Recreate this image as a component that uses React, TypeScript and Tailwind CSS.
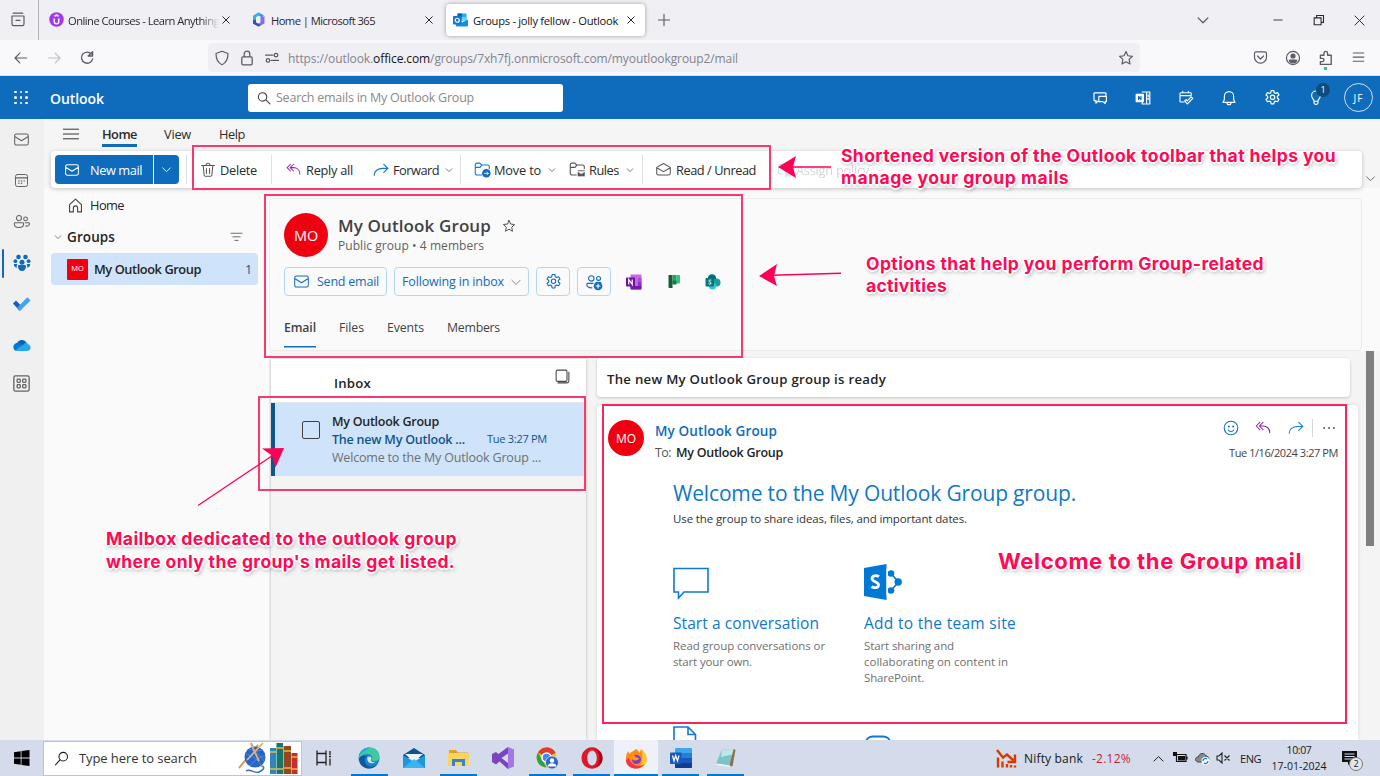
import React, { useLayoutEffect, useRef, useState } from "react";

type Kids = { children?: React.ReactNode };

/** Single line of text whose tracking is adjusted so that it spans `w` pixels; `drop` lowers it within its row. */
function Fit({ w, drop = true, className = "", children }: Kids & { w: number; drop?: boolean; className?: string }) {
  const ref = useRef<HTMLSpanElement>(null);
  const [spacing, setSpacing] = useState(0);
  useLayoutEffect(() => {
    const el = ref.current;
    if (!el) return;
    el.style.letterSpacing = "0px";
    const natural = el.getBoundingClientRect().width;
    const next = (w - natural) / Math.max(1, (el.textContent || "").length);
    el.style.letterSpacing = `${next}px`;
    setSpacing(next);
  }, [w]);
  return (
    <span ref={ref} className={`inline-block shrink-0 whitespace-pre ${drop ? "pt-[2px]" : ""} ${className}`} style={{ letterSpacing: spacing }}>
      {children}
    </span>
  );
}

/** Outline icon on a 20 unit grid. */
function Ico({ d, s = 16, sw = 1.3, className = "", children }: Kids & { d?: string; s?: number; sw?: number; className?: string }) {
  return (
    <svg
      width={s}
      height={s}
      viewBox="0 0 20 20"
      fill="none"
      stroke="currentColor"
      strokeWidth={sw}
      strokeLinecap="round"
      strokeLinejoin="round"
      className={`shrink-0 ${className}`}
    >
      {d && <path d={d} />}
      {children}
    </svg>
  );
}

const P = {
  x: "M3.500 3.500l13 13M16.500 3.500L3.500 16.500",
  chev: "M3 7l7 7 7-7",
  mail: "M4 3.5h12a2 2 0 0 1 2 2v9a2 2 0 0 1-2 2H4a2 2 0 0 1-2-2v-9a2 2 0 0 1 2-2zM2 6.5l8 5 8-5",
  replyAll: "M6 3L1.5 7.5 6 12M10 3L5.5 7.5 10 12M5.5 7.5H10c4.500 0 8.500 3 8.500 8.500",
  forward: "M13.500 3L18.500 8l-5 5M18.500 8H12C6 8 1.500 11.500 1.500 16.500",
  star: "M10 2l2.400 5.200 5.600.7-4.100 3.900 1.100 5.700-5-2.800-5 2.800 1.100-5.700L2 7.900l5.600-.7z",
  gear: "M8.400 1.800h3.200l.5 2.500 1.500.9 2.400-.9 1.600 2.800-1.900 1.600v1.900l1.900 1.700-1.600 2.700-2.400-.8-1.500.9-.5 2.500H8.400l-.5-2.500-1.500-.9-2.400.8-1.600-2.700 1.900-1.700V8.700L2.400 7.100 4 4.300l2.400.9 1.500-.9z",
};

const Gear = ({ s, className, sw }: { s: number; className?: string; sw?: number }) => (
  <Ico s={s} className={className} sw={sw} d={P.gear}>
    <circle cx="10" cy="9.700" r="2.600" />
  </Ico>
);

function OutlookLogo() {
  return (
    <svg width="15" height="14" viewBox="0 0 30 28" className="shrink-0">
      <path d="M9 1h18v14H9z" fill="#28a8ea" />
      <path d="M9 1h9v7H9z" fill="#0364b8" />
      <path d="M18 8h9v6h-9z" fill="#50d9ff" />
      <path d="M6 13l12 6 12-6v12a2 2 0 0 1-2 2H8a2 2 0 0 1-2-2z" fill="#1490df" />
      <rect x="0" y="6" width="17" height="17" rx="1.500" fill="#0f78d4" />
      <circle cx="8.500" cy="14.500" r="4" fill="none" stroke="#fff" strokeWidth="2.400" />
    </svg>
  );
}

function TabStrip() {
  return (
    <div className="flex h-10 shrink-0 items-center bg-[#f0eff4] text-[11.2px] text-[#2b2a33]">
      <div className="flex h-10 w-[39px] shrink-0 items-center justify-center border-r border-[#b4b3ba] pr-[3px] text-[#5b5b66]">
        <Ico s={16} d="M4 1.500h12M2.500 5h15v10a2 2 0 0 1-2 2h-11a2 2 0 0 1-2-2zM7.500 10.500h5" sw={1.500} />
      </div>
      <div className="flex w-[202px] shrink-0 items-center pl-[10px]">
        <svg width="15" height="15" viewBox="0 0 30 30" className="shrink-0">
          <circle cx="15" cy="15" r="14.500" fill="#a435f0" />
          <path d="M10.500 13v6a4.500 4.500 0 0 0 9 0v-6M11 8.500L15 6l4 2.500" fill="none" stroke="#fff" strokeWidth="3" />
        </svg>
        <div className="ml-[4px] flex w-[151px] overflow-hidden [mask-image:linear-gradient(to_right,black_88%,transparent)]">
          <Fit w={151}>Online Courses - Learn Anything</Fit>
        </div>
        <Ico s={10} d={P.x} sw={2} className="ml-[2px]" />
      </div>
      <div className="flex w-[205px] shrink-0 items-center pl-[10px]">
        <svg width="15" height="15" viewBox="0 0 30 30" className="shrink-0">
          <path d="M15 1l10 5v10l-6-3V9l-4-2-5 3v11l5 3v5L4 23V8z" fill="#4b8ff0" />
          <path d="M15 1L4 8v8l6-3v-3l6-4z" fill="#30b9dd" />
          <path d="M27 8v15l-12 6-5-3 9-5v-8l6-3z" fill="#8b6be0" />
          <path d="M4 16v7l11 6 5-3-10-5v-5z" fill="#3154b5" />
        </svg>
        <Fit w={104} className="ml-[5px]">Home | Microsoft 365</Fit>
        <Ico s={10} d={P.x} sw={2} className="ml-[49px]" />
      </div>
      <div className="flex h-8 w-[199px] shrink-0 items-center rounded-[4px] bg-white pl-[7px] shadow-[0_0_4px_rgba(0,0,0,0.35)]">
        <OutlookLogo />
        <Fit w={145} className="ml-[5px] text-[#15141a]">Groups - jolly fellow - Outlook</Fit>
        <Ico s={10} d={P.x} sw={2} className="ml-[8px]" />
      </div>
      <Ico s={14} d="M10 2v16M2 10h16" sw={1.600} className="ml-[12px] text-[#5b5b66]" />
      <Ico s={14} d={P.chev} sw={1.800} className="ml-[525px] text-[#5b5b66]" />
      <Ico s={12} d="M3 10h14" sw={1.500} className="ml-[62px]" />
      <Ico s={12} sw={1.800} className="ml-[29px]">
        <path d="M2 6.500h11.500V18H2zM6 6V2.500h11.500V14H14" strokeLinejoin="miter" />
      </Ico>
      <Ico s={13} d="M3 3l14 14M17 3L3 17" sw={1.500} className="ml-[28px]" />
    </div>
  );
}

function AddressBar() {
  return (
    <div className="flex h-9 shrink-0 items-center border-b border-[#cfe0ef] bg-[#f9f9fb] text-[#5b5b66]">
      <div className="flex gap-[17px] pl-[13px]">
        <Ico s={16} d="M17 10H2.500M8.500 4l-6 6 6 6" sw={1.500} />
        <Ico s={16} d="M3 10h14.500M11.500 4l6 6-6 6" sw={1.500} className="text-[#c0c0c6]" />
        <Ico s={16} d="M15.500 5a7 7 0 1 0 1.500 6M17 2v5.500h-5.500z" sw={1.600} />
      </div>
      <div className="ml-[113px] flex h-[29px] w-[932px] shrink-0 items-center rounded-[4px] bg-[#f0eff4] pl-[6px] pr-[6px]">
        <Ico s={16} d="M10 1.500l7.500 2.800C17.500 11 15 16 10 18.500 5 16 2.500 11 2.500 4.300z" sw={1.500} />
        <Ico s={16} d="M5 8.500h10a1.500 1.500 0 0 1 1.500 1.500v7a1.500 1.500 0 0 1-1.500 1.500H5A1.500 1.500 0 0 1 3.500 17v-7A1.500 1.500 0 0 1 5 8.500zM6.500 8V5a3.500 3.500 0 0 1 7 0v3" sw={1.600} className="ml-[9px]" />
        <Ico s={16} sw={1.600} className="ml-[9px]">
          <path d="M2 6.500h9M9 13h9" />
          <circle cx="15" cy="6.500" r="2.200" />
          <circle cx="5" cy="13" r="2.200" />
        </Ico>
        <Fit w={450} className="ml-[8px] text-[12px] text-[#83838c]">
          https://outlook.<span className="text-[#15141a]">office.com</span>/groups/7xh7fj.onmicrosoft.com/myoutlookgroup2/mail
        </Fit>
        <Ico s={16} d={P.star} sw={1.500} className="ml-auto" />
      </div>
      <div className="ml-[113px] flex gap-[17px]">
        <Ico s={15} d="M4 2.500h12A2 2 0 0 1 18 4.500v5a8 8 0 0 1-16 0v-5a2 2 0 0 1 2-2zM6 8l4 4 4-4" sw={1.600} />
        <Ico s={16} sw={1.500}>
          <circle cx="10" cy="10" r="8.200" />
          <circle cx="10" cy="7.500" r="2.500" fill="currentColor" />
          <path d="M5.500 12.500h9c0 2-2 3.500-4.500 3.500s-4.500-1.500-4.500-3.500z" fill="currentColor" />
        </Ico>
        <div className="relative">
          <Ico s={16} d="M3 6.500h4.500V4a2 2 0 0 1 4.500 0v2.500h4.500V18H3v-3.500h2.500a2 2 0 0 0 0-4H3z" sw={1.700} />
          <div className="absolute left-[6px] top-[17px] size-[3px] bg-[#2ac3a2]" />
        </div>
        <Ico s={15} d="M3 4h14M3 9.500h14M3 15h14" sw={1.500} />
      </div>
    </div>
  );
}

function SuiteHeader() {
  return (
    <div className="flex h-[43px] shrink-0 items-center bg-[#0f6cbd] text-white">
      <div className="ml-[14px] grid w-[14px] grid-cols-3 gap-[3px]">
        {Array.from({ length: 9 }, (_, i) => (
          <div key={i} className="size-[2.500px] rounded-full bg-white" />
        ))}
      </div>
      <Fit w={54} className="ml-[22px] text-[14px] font-semibold">Outlook</Fit>
      <div className="ml-[144px] flex h-7 w-[315px] items-center rounded-[3px] bg-white pl-[9px]">
        <Ico s={14} d="M14 8.500a6 6 0 1 1-12 0 6 6 0 0 1 12 0zM12.700 12.700L18.500 18.500" sw={1.600} className="text-[#444]" />
        <Fit w={198} className="ml-[5px] text-[12.5px] text-[#8a8a8a]">Search emails in My Outlook Group</Fit>
      </div>
      <div className="ml-[529px] flex items-center gap-[27px]">
        <Ico s={16} d="M5 13.500H3.500a1 1 0 0 1-1-1V4.500a1 1 0 0 1 1-1h13a1 1 0 0 1 1 1V7M5 13v3.500L8 13.500M8.500 8h9.500v6.500h-1.500V17l-3-2.500h-5z" sw={1.500} />
        <Ico s={16} sw={1.500}>
          <path d="M9 2.500h9.500v15H9v-3M14.500 3v14M16.500 6v2M16.500 10v2" />
          <path d="M1.500 5.500h9v9h-9z" fill="#fff" />
          <path d="M4.500 12V8l3 4V8" stroke="#0f6cbd" />
        </Ico>
        <Ico s={16} d="M7.500 15H3.500a1 1 0 0 1-1-1V4.500a1 1 0 0 1 1-1h12a1 1 0 0 1 1 1v2M2.500 7h14M6 1.500v2M13 1.500v2M8.500 13.500l3 4 7-7-2-2-5 5-1.200-1.500z" sw={1.400} />
        <Ico s={16} d="M10 2a5.800 5.800 0 0 0-5.800 5.800V12L2.500 15.500h15L15.800 12V7.800A5.800 5.800 0 0 0 10 2zM7.500 16a2.500 2.500 0 0 0 5 0" sw={1.400} />
        <Gear s={17} sw={1.400} />
        <div className="relative">
          <Ico s={16} d="M7.500 16v-2.500C6.500 11 4.500 10 4.500 6.800a5.500 5.500 0 0 1 11 0c0 3.200-2 4.200-3 6.700V16a2 2 0 0 1-2 2h-1a2 2 0 0 1-2-2zM7.500 14h5" sw={1.400} />
          <div className="absolute left-[8px] top-[-7px] flex size-[14px] items-center justify-center rounded-full bg-[#114b7a] text-[9px]">1</div>
        </div>
      </div>
      <div className="ml-[20px] flex size-[29px] items-center justify-center rounded-full border border-white/80 text-[10px]"><Fit w={10}>JF</Fit></div>
    </div>
  );
}

const GroupsFilled = () => (
  <svg width="18" height="18" viewBox="0 0 18 18" fill="#0f6cbd" className="shrink-0">
    <circle cx="5.500" cy="3" r="2.300" />
    <circle cx="12.500" cy="3" r="2.300" />
    <circle cx="9" cy="8.200" r="2.500" />
    <circle cx="2.400" cy="7.200" r="1.900" />
    <circle cx="15.600" cy="7.200" r="1.900" />
    <path d="M5 12.200c0-.7.500-1.200 1.200-1.200h5.600c.7 0 1.200.5 1.200 1.200C13 15 11.400 17 9 17s-4-2-4-4.800zM.8 10h3.700c-.8 1-1 2-.6 3.800C1.800 13.500.8 12 .8 10zM17.200 10h-3.700c.8 1 1 2 .6 3.800 2.100-.3 3.100-1.800 3.100-3.800z" />
  </svg>
);

function AppRail() {
  return (
    <div className="flex w-11 shrink-0 flex-col items-center bg-[#f0f0f0] text-[#616161]">
      <div className="flex h-[41px] w-full items-center pl-[13px]"><Ico s={17} d={P.mail} sw={1.200} /></div>
      <div className="flex h-[41px] w-full items-center pl-[14px]">
        <Ico s={15} sw={1.300}>
          <rect x="2" y="2" width="16" height="16" rx="2.500" />
          <path d="M2 6.500h16M6.500 10.500h.2M10 10.500h.2M13.500 10.500h.2M6.500 13.700h.2M10 13.700h.2" strokeWidth="1.800" />
        </Ico>
      </div>
      <div className="flex h-[41px] w-full items-center pl-[13px]">
        <Ico s={17} sw={1.200}>
          <circle cx="7" cy="6" r="3" />
          <circle cx="14.800" cy="7" r="2.200" />
          <path d="M2.500 11.500h9c.6 0 1 .4 1 1 0 3-2 4.500-5.500 4.500s-5.500-1.500-5.500-4.500c0-.6.400-1 1-1zM14.500 11.500h4c.5 0 .9.400.9.900 0 2-1.800 3.300-4.400 3" />
        </Ico>
      </div>
      <div className="flex h-[42px] w-full items-center">
        <div className="ml-[2px] h-[29px] w-[2px] rounded bg-[#0f6cbd]" />
        <div className="ml-[9px]"><GroupsFilled /></div>
      </div>
      <div className="flex h-[40px] w-full items-center pl-[13px]">
        <svg width="18" height="14" viewBox="0 0 18 14">
          <path d="M0 6.500L3 3.500l6.500 6.500-3 3.800z" fill="#185abd" />
          <path d="M4 11l10-10.500c.5-.5 3 2 3.500 3L7.500 13.500c-.6.500-1 .5-1.500 0z" fill="#41a5ee" />
        </svg>
      </div>
      <div className="flex h-[42px] w-full items-center pl-[13px]">
        <svg width="18" height="12" viewBox="0 0 18 12">
          <path d="M4 5a5.200 5.200 0 0 1 9.500-1.500L9 8z" fill="#0364b8" />
          <path d="M4 3.800c2-.5 4 .5 9 4L3.500 12C-.5 11.800-1 5 4 3.800z" fill="#0078d4" />
          <path d="M2 11.200l9-6c1-2 3.500-1.800 4 0 3.500.7 3.500 6.500-.5 6.800H4z" fill="#28a8ea" />
        </svg>
      </div>
      <div className="flex h-[35px] w-full items-center pl-[13px]">
        <Ico s={17} sw={1.500}>
          <rect x="1" y="1" width="18" height="18" rx="2" />
          <rect x="4.800" y="4.800" width="3.800" height="3.800" rx="1" />
          <rect x="11.400" y="4.800" width="3.800" height="3.800" rx="1" />
          <rect x="4.800" y="11.400" width="3.800" height="3.800" rx="1" />
          <rect x="11.400" y="11.400" width="3.800" height="3.800" rx="1" />
        </Ico>
      </div>
    </div>
  );
}

const Sep = ({ className }: { className: string }) => <div className={`h-[29px] w-px shrink-0 bg-[#e0e0e0] ${className}`} />;
const Folder = ({ blue }: { blue?: boolean }) => (
  <Ico s={17} sw={1.300} className={blue ? "text-[#0f7bd4]" : "text-[#555]"}>
    <path d="M9 16.500H3.500a2 2 0 0 1-2-2v-10a2 2 0 0 1 2-2h3.300l2.200 2.200h7a2 2 0 0 1 2 2V9M1.500 7.500h5.500l2-2.300" />
    {blue ? (
      <>
        <circle cx="14.500" cy="14.500" r="5" fill="#0f6cbd" stroke="none" />
        <path d="M12.300 14.500h4.400M15.200 12.800l1.700 1.700-1.700 1.700" stroke="#fff" strokeWidth="1" />
      </>
    ) : (
      <path d="M10 10.500h9v8h-9zM10 12l4.500 3 4.500-3" fill="#555" stroke="#fff" strokeWidth=".9" />
    )}
  </Ico>
);

function Ribbon() {
  return (
    <div className="h-[69px] shrink-0 bg-[#f5f5f5] text-[12.8px] text-[#2b2b2b]">
      <div className="flex h-8 items-start pl-[19px]">
        <Ico s={16} d="M0.500 4h19M0.500 10h19M0.500 16h19" sw={1.200} className="mt-[7px]" />
        <div className="ml-[23px] mt-[4px] flex h-[24px] flex-col border-b-[3px] border-[#0f6cbd]">
          <Fit w={35} className="font-semibold">Home</Fit>
        </div>
        <Fit w={27} className="ml-[27px] mt-[4px]">View</Fit>
        <Fit w={26} className="ml-[28px] mt-[4px]">Help</Fit>
      </div>
      <div className="flex">
        <div className="ml-[7px] flex h-[37px] w-[1311px] items-center rounded-[4px] bg-white pl-[4px] shadow-[0_1px_4px_rgba(0,0,0,0.22)]">
          <div className="flex h-[29px] w-[98px] shrink-0 items-center rounded-l-[4px] bg-[#0f6cbd] pl-[9px] text-white">
            <Ico s={16} d={P.mail} />
            <Fit w={52} className="ml-[10px]">New mail</Fit>
          </div>
          <div className="ml-px flex h-[29px] w-[25px] shrink-0 items-center justify-center rounded-r-[4px] bg-[#0f6cbd] text-white">
            <Ico s={11} d={P.chev} sw={1.700} />
          </div>
          <Sep className="ml-[7px]" />
          <Ico s={16} d="M2 4.500h16M4 5l1.200 11.500a1.500 1.500 0 0 0 1.500 1.300h6.600a1.500 1.500 0 0 0 1.500-1.300L16 5M7.500 4a2.500 2.500 0 0 1 5 0M8 8v6.500M12 8v6.500" sw={1.300} className="ml-[13px] text-[#555]" />
          <Fit w={37} className="ml-[4px]">Delete</Fit>
          <Sep className="ml-[14px]" />
          <Ico s={15} d={P.replyAll} sw={1.400} className="ml-[14px] text-[#8a2da5]" />
          <Fit w={47} className="ml-[5px]">Reply all</Fit>
          <Ico s={16} d={P.forward} sw={1.500} className="ml-[20px] text-[#0f7bd4]" />
          <Fit w={46} className="ml-[4px]">Forward</Fit>
          <Ico s={8} d={P.chev} sw={2} className="ml-[6px] text-[#555]" />
          <Sep className="ml-[7px]" />
          <div className="ml-[13px] shrink-0"><Folder blue /></div>
          <Fit w={47} className="ml-[3px]">Move to</Fit>
          <Ico s={8} d={P.chev} sw={2} className="ml-[7px] text-[#555]" />
          <div className="ml-[13px] shrink-0"><Folder /></div>
          <Fit w={30} className="ml-[3px]">Rules</Fit>
          <Ico s={8} d={P.chev} sw={2} className="ml-[7px] text-[#555]" />
          <Sep className="ml-[8px]" />
          <Ico s={17} d="M2 7.500v7a2 2 0 0 0 2 2h12a2 2 0 0 0 2-2v-7L10 3zM2 8l8 4.500L18 8" sw={1.200} className="ml-[12px] text-[#555]" />
          <Fit w={80} className="ml-[4px]">Read / Unread</Fit>
          <div className="ml-[21px] flex items-center opacity-20">
            <Ico s={16} sw={1.400} className="text-[#0f6cbd]">
              <path d="M8 15H3.500a1.500 1.500 0 0 1-1.500-1.500v-9A1.500 1.500 0 0 1 3.500 3h13A1.500 1.500 0 0 1 18 4.500v5M2 6.500h16" />
              <path d="M11 11h6v7l-3-2-3 2z" fill="currentColor" />
            </Ico>
            <Fit w={73} className="ml-[3px]">Assign policy</Fit>
            <Ico s={8} d={P.chev} sw={2} className="ml-[7px]" />
          </div>
        </div>
        <Ico s={11} d={P.chev} sw={1.700} className="ml-[3px] mt-[22px] text-[#616161]" />
      </div>
    </div>
  );
}

function FolderPane() {
  return (
    <div className="w-[225px] shrink-0 text-[12.8px] text-[#242424]">
      <div className="flex h-[34px] items-center pl-[23px]">
        <Ico s={17} d="M3 9l7-6.500L17 9v8.500h-4.500V13a2.500 2.500 0 0 0-5 0v4.500H3z" sw={1.300} className="text-[#444]" />
        <Fit w={34} className="ml-[6px]">Home</Fit>
      </div>
      <div className="flex h-[29px] items-center pl-[10px]">
        <Ico s={8} d={P.chev} sw={2} className="text-[#616161]" />
        <Fit w={48} className="ml-[5px] text-[13.5px] font-semibold">Groups</Fit>
        <Ico s={13} d="M1.500 5h17M4.500 10.500h11M7.500 16h5" sw={1.400} className="ml-[115px] text-[#616161]" />
      </div>
      <div className="ml-[7px] mt-[2px] flex h-8 w-[207px] items-center rounded-[4px] bg-[#cfe4fa] pl-[16px]">
        <div className="flex size-[21px] shrink-0 items-center justify-center rounded-[1px] bg-[#ee0010] text-[7.5px] text-white">MO</div>
        <Fit w={107} className="ml-[6px] font-semibold">My Outlook Group</Fit>
        <span className="ml-[44px] pt-[2px] text-[12.5px] text-[#0f548c]">1</span>
      </div>
    </div>
  );
}

const OneNote = () => (
  <svg width="16" height="16" viewBox="0 0 32 32" className="shrink-0">
    <rect x="9" y="1" width="22" height="30" rx="2" fill="#ca64ea" />
    <path d="M24 8h7v8h-7z" fill="#ae4bd5" />
    <path d="M24 16h7v8h-7z" fill="#9332bf" />
    <path d="M9 24h22v5a2 2 0 0 1-2 2H11a2 2 0 0 1-2-2z" fill="#7719aa" />
    <rect x="0" y="7" width="18" height="18" rx="1.500" fill="#6a1599" />
    <path d="M5.500 21V11l7 10V11" fill="none" stroke="#fff" strokeWidth="2.400" />
  </svg>
);
const Planner = () => (
  <svg width="14" height="15" viewBox="0 0 28 30" className="shrink-0">
    <path d="M3 2h8v26H5a2 2 0 0 1-2-2z" fill="#185c37" />
    <path d="M11 2h8v17h-8z" fill="#21a366" />
    <path d="M19 2h5a2 2 0 0 1 2 2v13a2 2 0 0 1-2 2h-5z" fill="#33c481" />
    <path d="M11 13h8v8h-8z" fill="#107c41" />
  </svg>
);
const SharePoint = () => (
  <svg width="16" height="16" viewBox="0 0 32 32" className="shrink-0">
    <circle cx="14" cy="9" r="8.500" fill="#036c70" />
    <circle cx="23" cy="17" r="8" fill="#1a9ba1" />
    <circle cx="15" cy="24" r="7" fill="#37c6d0" />
    <rect x="1" y="8" width="17" height="17" rx="1.500" fill="#03787c" />
    <path d="M12.500 12.500c-3-1.500-6 .5-4.500 2.500 1 1.200 4 1 4.300 3 .2 2.500-3.500 2.800-5.300 1.500" fill="none" stroke="#fff" strokeWidth="2" />
  </svg>
);

function GroupHeader() {
  const box = "flex h-[29px] shrink-0 items-center rounded-[4px] border border-[#b4d6fa] text-[#0f6cbd]";
  return (
    <div className="mt-[10px] h-[153px] w-[1093px] shrink-0 rounded-[4px] border border-[#ebebeb] bg-[#fafafa] pl-[14px] text-[#424242]">
      <div className="flex h-[68px] items-start">
        <div className="mt-[14px] flex size-[44px] shrink-0 items-center justify-center rounded-full bg-[#ee0010] text-[14.5px] text-white">
          <Fit w={24}>MO</Fit>
        </div>
        <div className="ml-[10px] mt-[16px]">
          <div className="flex h-[22px] items-center">
            <Fit w={153} className="text-[17px] font-semibold" drop={false}>My Outlook Group</Fit>
            <Ico s={14} d={P.star} sw={1.300} className="ml-[11px]" />
          </div>
          <div className="flex h-[18px] items-center">
            <Fit w={146} drop={false} className="text-[12px] text-[#616161]">Public group • 4 members</Fit>
          </div>
        </div>
      </div>
      <div className="flex items-center text-[12.5px]">
        <div className={`${box} w-[103px] pl-[8px]`}>
          <Ico s={17} d={P.mail} sw={1.200} />
          <Fit w={62} className="ml-[7px]">Send email</Fit>
        </div>
        <div className={`${box} ml-[7px] w-[135px] pl-[7px]`}>
          <Fit w={102}>Following in inbox</Fit>
          <Ico s={12} d={P.chev} sw={1.400} className="ml-[6px] text-[#777]" />
        </div>
        <div className={`${box} ml-[7px] w-[34px] justify-center`}><Gear s={17} sw={1.300} /></div>
        <div className={`${box} ml-[7px] w-[34px] justify-center`}>
          <Ico s={18} sw={1.200}>
            <circle cx="7" cy="6" r="3" />
            <circle cx="15" cy="6" r="2.200" />
            <path d="M9 11.500H3c-.6 0-1 .4-1 1 0 2.500 2 4 5.500 4M12.500 10.500h5" />
            <circle cx="14.500" cy="14.500" r="4.800" fill="#0f6cbd" stroke="none" />
            <path d="M12.300 14.500h4.400M14.500 12.300v4.400" stroke="#fff" />
          </Ico>
        </div>
        <div className="ml-[15px] flex"><OneNote /></div>
        <div className="ml-[25px] flex"><Planner /></div>
        <div className="ml-[24px] flex"><SharePoint /></div>
      </div>
      <div className="mt-[21px] flex h-[30px] items-start text-[12.3px]">
        <div className="flex h-[30px] border-b border-[#0f6cbd] shadow-[0_0.500px_0_#0f6cbd]">
          <Fit w={32} className="font-semibold">Email</Fit>
        </div>
        <Fit w={25} className="ml-[23px]">Files</Fit>
        <Fit w={37} className="ml-[23px]">Events</Fit>
        <Fit w={53} className="ml-[23px]">Members</Fit>
      </div>
    </div>
  );
}

function MessageList() {
  return (
    <div className="ml-[2px] mt-[8px] w-[315px] shrink-0 bg-[#f4f4f4] shadow-[0_0_3px_rgba(0,0,0,0.25)]">
      <div className="flex h-[44px] justify-between border-b border-[#e6e6e6] bg-white pl-[63px] pr-[16px] pt-[10px]">
        <Fit w={37} className="mt-[3px] text-[13.200px] font-semibold text-[#242424]">Inbox</Fit>
        <Ico s={15} sw={1.400} className="text-[#444]">
          <rect x="1.500" y="1.500" width="14.500" height="15" rx="2" />
          <path d="M4 18.500h12a2.500 2.500 0 0 0 2.500-2.500V4" />
        </Ico>
      </div>
      <div className="flex h-[73px] border-l-4 border-[#0f548c] bg-[#cfe4fa] pl-[27px]">
        <div className="mt-[18px] size-[18px] rounded-[2px] border border-[#424242]" />
        <div className="ml-[12px] mt-[9px] text-[12.5px]">
          <div className="flex h-[18px] items-center font-semibold text-[#242424]"><Fit w={107}>My Outlook Group</Fit></div>
          <div className="flex h-[18px] items-center text-[#0f548c]">
            <Fit w={133} className="font-semibold">The new My Outlook ...</Fit>
            <Fit w={60} drop={false} className="ml-[22px] text-[11px]">Tue 3:27 PM</Fit>
          </div>
          <div className="flex h-[18px] items-center text-[#707070]"><Fit w={209}>Welcome to the My Outlook Group ...</Fit></div>
        </div>
      </div>
    </div>
  );
}

function ReadingPane() {
  return (
    <div className="ml-[11px] flex flex-1 flex-col pt-[7px]">
      <div className="flex h-[39px] w-[753px] shrink-0 items-center rounded-[4px] bg-white pl-[10px] pt-[3px] shadow-[0_1px_3px_rgba(0,0,0,0.2)]">
        <Fit w={279} className="text-[13.200px] font-semibold text-[#242424]">The new My Outlook Group group is ready</Fit>
      </div>
      <div className="mt-[8px] w-[761px] flex-1 rounded-t-[4px] bg-white pl-[11px] shadow-[0_0_4px_rgba(0,0,0,0.12)]">
        <div className="flex h-[75px] items-start">
          <div className="mt-[15px] flex size-9 shrink-0 items-center justify-center rounded-full bg-[#ee0010] text-[12px] text-white">
            <Fit w={20}>MO</Fit>
          </div>
          <div className="ml-[11px] mt-[15px]">
            <div className="flex h-[21px] items-center"><Fit w={122} className="text-[13.500px] font-semibold text-[#0f6cbd]">My Outlook Group</Fit></div>
            <div className="flex h-[22px] items-center text-[12.500px] text-[#242424]">
              <Fit w={16} className="text-[#555]">To:</Fit>
              <Fit w={107} className="ml-[5px] font-semibold">My Outlook Group</Fit>
            </div>
          </div>
          <div className="ml-auto mr-[20px] mt-[12px] flex flex-col items-end">
            <div className="flex h-[22px] items-center">
              <Ico s={16} sw={1.300} className="text-[#0f6cbd]">
                <circle cx="10" cy="10" r="8.500" />
                <path d="M6.500 12.500c1.500 2.400 5.500 2.400 7 0" />
                <circle cx="7.300" cy="8" r=".6" fill="currentColor" />
                <circle cx="12.700" cy="8" r=".6" fill="currentColor" />
              </Ico>
              <Ico s={16} d={P.replyAll} sw={1.300} className="ml-[16px] text-[#8a2da5]" />
              <Ico s={16} d={P.forward} sw={1.300} className="ml-[17px] text-[#0f7bd4]" />
              <div className="ml-[8px] h-[18px] w-px bg-[#d8d8d8]" />
              <Ico s={14} sw={2.800} className="ml-[9px] mr-[2px] text-[#616161]" d="M3 10h.1M10 10h.1M17 10h.1" />
            </div>
            <Fit w={109} className="mt-[4px] text-[11px] text-[#424242]">Tue 1/16/2024 3:27 PM</Fit>
          </div>
        </div>
        <div className="pl-[65px]">
          <div className="flex h-[27px] items-center"><Fit w={403} drop={false} className="text-[21px] leading-[27px] text-[#0f78c8]">Welcome to the My Outlook Group group.</Fit></div>
          <div className="mt-[3px] flex h-[18px] items-center"><Fit w={294} drop={false} className="text-[11.500px] text-[#333]">Use the group to share ideas, files, and important dates.</Fit></div>
          <div className="mt-[36px] flex">
            <div className="w-[191px]">
              <svg width="36" height="36" viewBox="0 0 36 36" fill="none" stroke="#0f78d4" strokeWidth="1.600">
                <path d="M1 4.500h34V28H11l-5.500 6V28H1z" />
              </svg>
              <div className="mt-[11px] flex h-[24px] items-center"><Fit w={146} className="text-[15.500px] text-[#0f78c8]">Start a conversation</Fit></div>
              <div className="mt-[3px] flex flex-col items-start text-[11.500px] leading-4 text-[#707070]">
                <Fit w={152} drop={false}>Read group conversations or</Fit>
                <Fit w={79} drop={false}>start your own.</Fit>
              </div>
            </div>
            <div>
              <svg width="38" height="36" viewBox="0 0 38 36">
                <path d="M0 4l22.500-4v36L0 32z" fill="#0078d7" />
                <path d="M15 12.500c-3-1.800-7-.8-7 2 0 3.500 6.500 3 6.500 6.500 0 3-4.200 3.300-7 1.800" fill="none" stroke="#fff" strokeWidth="2.800" />
                <path d="M27 9.500l7.500 8.500-7.500 8.500" fill="none" stroke="#0078d7" strokeWidth="1.600" />
                <circle cx="27" cy="9.500" r="3.300" fill="#0078d7" />
                <circle cx="34.200" cy="18" r="3.700" fill="#0078d7" />
                <circle cx="27" cy="26.500" r="3.300" fill="#0078d7" />
                <path d="M23.200 5v26" stroke="#fff" strokeWidth="1.500" />
              </svg>
              <div className="mt-[11px] flex h-[24px] items-center"><Fit w={152} className="text-[15.500px] text-[#0f78c8]">Add to the team site</Fit></div>
              <div className="mt-[3px] flex flex-col items-start text-[11.500px] leading-4 text-[#707070]">
                <Fit w={90} drop={false}>Start sharing and</Fit>
                <Fit w={144} drop={false}>collaborating on content in</Fit>
                <Fit w={60} drop={false}>SharePoint.</Fit>
              </div>
            </div>
          </div>
          <div className="mt-[40px] flex h-[14px] overflow-hidden">
            <svg width="24" height="20" viewBox="0 0 24 20" fill="none" stroke="#0f78d4" strokeWidth="1.600" className="shrink-0">
              <path d="M1 20V1h14l7.500 7.500V20M15 1v7.500h7.500" />
            </svg>
            <svg width="26" height="20" viewBox="0 0 26 20" fill="none" stroke="#0f78d4" strokeWidth="2" className="ml-[168px] mt-[9px] shrink-0">
              <path d="M1 20V8c0-4 3-6.500 7-6.500h10c4 0 7 2.500 7 6.500v12" />
            </svg>
          </div>
        </div>
      </div>
    </div>
  );
}

const Callout = ({ className, children }: Kids & { className: string }) => (
  <div
    className={`absolute flex flex-col items-start font-[Inter,sans-serif] text-[17.500px] leading-[22.500px] font-bold text-[#ff0a54] [text-shadow:1px_1px_0_#fff,-1px_-1px_0_#fff,1px_-1px_0_#fff,-1px_1px_0_#fff,0_2px_0_#fff,0_-2px_0_#fff,2px_0_0_#fff,-2px_0_0_#fff,1px_2px_4px_rgba(0,0,0,0.45)] ${className}`}
  >
    {children}
  </div>
);

function Annotations() {
  return (
    <>
      <div className="absolute left-[192px] top-[145px] h-[45px] w-[579px] border-2 border-[#f7396f]" />
      <div className="absolute left-[264px] top-[194px] h-[164px] w-[479px] border-2 border-[#f7396f]" />
      <div className="absolute left-[258px] top-[396px] h-[95px] w-[328px] border-2 border-[#f7396f]" />
      <div className="absolute left-[602px] top-[404px] h-[320px] w-[745px] border-2 border-[#f7265f]" />
      <svg className="absolute left-0 top-0" width="1380" height="776" fill="#ff0055" stroke="none">
        <path d="M778 167l18-11-3 11 3 11z" />
        <path d="M790 167h41" stroke="#ff0055" strokeWidth="1.600" />
        <path d="M759 276l18-12-3 12 3 10z" />
        <path d="M772 275.300l69-2" stroke="#ff0055" strokeWidth="1.500" />
        <path d="M284 448l-22 .5 10 7 3.500 12z" />
        <path d="M198 505.500l76-51" stroke="#ff0055" strokeWidth="1.300" />
      </svg>
      <Callout className="left-[841px] top-[144.500px]">
        <Fit w={495} drop={false}>Shortened version of the Outlook toolbar that helps you</Fit>
        <Fit w={228} drop={false}>manage your group mails</Fit>
      </Callout>
      <Callout className="left-[866px] top-[252.500px]">
        <Fit w={398} drop={false}>Options that help you perform Group-related</Fit>
        <Fit w={81} drop={false}>activities</Fit>
      </Callout>
      <Callout className="left-[106px] top-[528px]">
        <Fit w={351} drop={false}>Mailbox dedicated to the outlook group</Fit>
        <Fit w={349} drop={false}>where only the group's mails get listed.</Fit>
      </Callout>
      <Callout className="left-[998px] top-[550px]">
        <Fit w={304} drop={false} className="text-[22px]">Welcome to the Group mail</Fit>
      </Callout>
    </>
  );
}

function TaskApp({ className, line = "", children }: Kids & { className: string; line?: string }) {
  return (
    <div className={`flex h-9 shrink-0 flex-col items-center ${className}`}>
      <div className="flex h-[34px] items-center pt-[2px]">{children}</div>
      <div className={`h-[2px] ${line}`} />
    </div>
  );
}

function Taskbar() {
  const on = "w-[37px] bg-[#0078d4]";
  return (
    <div className="flex h-9 shrink-0 items-center bg-[#d4dbea] text-[#1a1a1a]">
      <svg width="16" height="16" viewBox="0 0 16 16" className="ml-[14px] shrink-0">
        <path d="M0 2.200L6.700 1.200V7.600H0zM7.500 1.100L15.500 0V7.600H7.500zM0 8.400H6.700V14.800L0 13.800zM7.500 8.400H15.500V16L7.500 14.900z" />
      </svg>
      <div className="ml-[13px] flex h-[35px] w-[259px] shrink-0 items-center border border-[#c4c4c4] bg-white pl-[10px]">
        <Ico s={15} d="M18 7.500a5.700 5.700 0 1 1-11.400 0 5.700 5.700 0 0 1 11.400 0zM8.200 11.500L2 18.500" sw={1.400} />
        <Fit w={118} className="ml-[10px] text-[13px] text-[#333]">Type here to search</Fit>
        <svg width="31" height="32" viewBox="0 0 31 32" className="ml-[41px] shrink-0">
          <path d="M8 29c4-3 8 3 13 1s6-5 3-6" fill="none" stroke="#2a6fd6" strokeWidth="1.400" />
          <path d="M1 26L20 3M24 25L13 1" stroke="#dc9a5c" strokeWidth="2" />
          <circle cx="17" cy="15" r="10.500" fill="#2467c6" />
          <path d="M8 12c6 1 12 6 15 11M11 7c6 2 12 7 15 12M8 19c5-6 9-10 16-11M12 24c5-6 9-9 15-10" fill="none" stroke="#4f8fe0" strokeWidth=".9" />
          <path d="M9 18L25 1M14 4l7 15" stroke="#e8ae74" strokeWidth="1.800" />
        </svg>
        <svg width="28" height="32" viewBox="0 0 28 32" className="ml-[1px] shrink-0">
          <rect x="0" y="6" width="6" height="26" fill="#2f86b8" />
          <rect x="6.500" y="1" width="6.500" height="31" fill="#16766e" />
          <rect x="13.500" y="4" width="7.500" height="28" fill="#93481f" />
          <rect x="21.500" y="11" width="6" height="21" fill="#c92c2c" />
          <path d="M0 10h6M0 27h6M6.500 6h6.500M6.500 27h6.500M13.500 9h7.500M13.500 26h7.500M21.500 15h6M21.500 27h6" stroke="#e9b84a" strokeWidth="1.300" />
        </svg>
      </div>
      <svg width="16" height="16" viewBox="0 0 16 16" fill="none" stroke="#222" strokeWidth="1.300" className="ml-[14px] shrink-0">
        <path d="M1 .5v3h9v-3M1 15.500v-3h9v3M1 3.500v9M10 3.500v9M14 1v4M14 8.500v7M13 6.500h2" />
      </svg>
      <TaskApp className="ml-[18px] w-[38px]" line={on}>
        <svg width="22" height="22" viewBox="0 0 44 44">
          <circle cx="22" cy="22" r="21" fill="#1387c9" />
          <path d="M2 18C5 6 14 1 24 1c12 0 20 9 19 20-1 7-9 9-16 6 4-6 0-13-8-13C9 14 3 20 2 26z" fill="#3ec9a0" />
          <path d="M2 18C5 6 14 1 24 1 20 5 8 9 2 18z" fill="#2ba9df" />
          <path d="M18 19c-5 3-6 9-3 14 5 8 16 8 23 2-3 5-9 8-16 8C12 43 3 36 2 24c3-8 11-8 16-5z" fill="#0c59a4" />
          <path d="M19 20c5-3 10 0 7 6-2 3 4 5 9 5-7 4-19 1-16-11z" fill="#dbe2ee" />
        </svg>
      </TaskApp>
      <TaskApp className="ml-[8px] w-[36px]">
        <svg width="22" height="20" viewBox="0 0 22 20">
          <path d="M0 7l11-7 11 7v3H0z" fill="#0b5592" />
          <path d="M2 6h18l-9 8z" fill="#eef3f8" />
          <path d="M0 7l11 7 11-7v13H0z" fill="#1c98e0" />
          <path d="M0 20L11 11l11 9z" fill="#3bb4f2" />
        </svg>
      </TaskApp>
      <TaskApp className="ml-[8px] w-[37px]" line={on}>
        <svg width="21" height="18" viewBox="0 0 21 18">
          <path d="M1 1h7l2 2.500h10V6H1z" fill="#e2a21b" />
          <path d="M0 4h21v13H0z" fill="#fcd462" />
          <path d="M4 17v-7h13v7h-3v-4H7v4z" fill="#2f86d6" />
        </svg>
      </TaskApp>
      <TaskApp className="ml-[7px] w-[37px]">
        <svg width="22" height="22" viewBox="0 0 22 22">
          <path d="M16 0l6 2.500v17L16 22z" fill="#a974e6" />
          <path d="M16 0v7L4 17.500 0 15V7l4-2 12 10.500V22L2.500 10 1 11z" fill="#7a45bd" />
          <path d="M16 6.500L9.500 11l6.500 5z" fill="#d4dbea" />
        </svg>
      </TaskApp>
      <TaskApp className="ml-[8px] w-[37px]" line={on}>
        <svg width="23" height="22" viewBox="0 0 46 44">
          <circle cx="21" cy="21" r="20" fill="#fbc116" />
          <path d="M21 21L4 11A20 20 0 0 1 39 12z" fill="#e33b2e" />
          <path d="M4 11l12 21 5 9A20 20 0 0 1 4 11z" fill="#2ba24c" />
          <path d="M21 1a20 20 0 0 1 18 11H21z" fill="#e33b2e" />
          <circle cx="21" cy="21" r="9" fill="#4285f4" stroke="#fff" strokeWidth="3" />
          <circle cx="32" cy="31" r="13" fill="#2d67c7" stroke="#dfe8f6" strokeWidth="1.500" />
          <circle cx="32" cy="27" r="4.500" fill="#fff" />
          <path d="M23 39c0-9 18-9 18 0z" fill="#fff" />
        </svg>
      </TaskApp>
      <TaskApp className="ml-[7px] w-[37px]" line={on}>
        <svg width="22" height="22" viewBox="0 0 22 22">
          <path fillRule="evenodd" d="M11 .2a10.500 10.800 0 1 0 .01 0zM11 3.400a4.800 7.600 0 1 1-.01 0z" fill="#e0162b" />
          <path d="M14 2.500c6 2 6 15 0 17 10 0 10-16 0-17z" fill="#a70014" />
        </svg>
      </TaskApp>
      <TaskApp className="ml-[4px] w-[44px] bg-[#eef1f8]" line="w-[44px] bg-[#0078d4]">
        <svg width="22" height="22" viewBox="0 0 44 44">
          <path d="M22 4c4 2 6 5 7 9l3-9c8 6 12 14 11 23-1 9-10 16-21 16S2 36 2 26C1 19 4 11 7 8l1 6c3-4 9-5 14-10z" fill="#ff8a16" />
          <path d="M32 4c8 6 12 14 11 23-1 9-10 16-21 16 12-4 16-17 10-39z" fill="#ffc832" />
          <path d="M2 26c0 10 9 17 20 17 8 0 14-4 17-9-10 7-26 5-31-12z" fill="#f5324f" />
          <circle cx="23" cy="25" r="9" fill="#7a3fd0" />
          <path d="M12 18c4-2 8 0 10 3 4 0 6 0 6 2s-4 3-7 4c-5 0-9-4-9-9z" fill="#ff9a1c" />
        </svg>
      </TaskApp>
      <TaskApp className="ml-[4px] w-[37px]" line={on}>
        <svg width="22" height="20" viewBox="0 0 22 20">
          <rect x="5" y="0" width="17" height="20" rx="1" fill="#41a5ee" />
          <path d="M5 5h17v5H5z" fill="#2b7cd3" />
          <path d="M5 10h17v5H5z" fill="#185abd" />
          <path d="M5 15h17v4a1 1 0 0 1-1 1H6a1 1 0 0 1-1-1z" fill="#103f91" />
          <rect x="0" y="4.500" width="11.500" height="11.500" rx="1" fill="#185abd" />
          <path d="M2.500 7.500l1.500 5.500 1.700-5.500L7.500 13 9 7.500" fill="none" stroke="#fff" strokeWidth="1.200" />
        </svg>
      </TaskApp>
      <TaskApp className="ml-[8px] w-[37px]" line={on}>
        <svg width="20" height="20" viewBox="0 0 20 20">
          <path d="M7 2l11-1 1.500 1-3 16.500L14 18z" fill="#8f7048" />
          <path d="M6 1.500L17.500 1 13.500 17.500 0 15.500z" fill="#7cc4cc" />
          <path d="M6 1.500L17.500 1 16 6.500 5 9z" fill="#bde6e9" />
          <path d="M0 15.500l13.500 2L14 19 1 17z" fill="#f4f4f4" />
        </svg>
      </TaskApp>
      <svg width="21" height="19" viewBox="0 0 21 19" fill="none" stroke="#d83b01" strokeWidth="2.400" className="ml-[252px] shrink-0">
        <path d="M1 1l6 7.500 4-3 6.500 6M19 5.500v7.500h-7.500" />
        <path d="M2 8.500V18.500M6.500 12.500v6M11 15v3.500M15 16v2.500M19 16.500v2" />
      </svg>
      <Fit w={59} className="ml-[7px] text-[12px]">Nifty bank</Fit>
      <Fit w={39} className="ml-[9px] text-[12px] text-[#c8282d]">-2.12%</Fit>
      <Ico s={13} d="M3 14l7-7 7 7" sw={1.500} className="ml-[21px]" />
      <svg width="15" height="12" viewBox="0 0 15 12" className="ml-[8px] shrink-0">
        <path d="M3.500 2.500h9.500v7h-9.500zM14 4.500v3" fill="none" stroke="#111" strokeWidth="1.200" />
        <path d="M5 4h7v4.500H5zM0 0h4v4H0z" fill="#111" />
      </svg>
      <svg width="15" height="13" viewBox="0 0 15 13" className="ml-[7px] shrink-0">
        <path d="M3 10C-1 9 0 4.500 3.500 5 4 .5 10 .5 11 4c3 0 4 4 1 6z" fill="#8a8a8a" stroke="#444" strokeWidth="1" />
        <circle cx="10.500" cy="9" r="4" fill="#fff" />
        <path d="M8 9a2.500 2.500 0 0 1 4-2M13 9a2.500 2.500 0 0 1-4 2" fill="none" stroke="#0078d4" strokeWidth="1.200" />
      </svg>
      <svg width="14" height="12" viewBox="0 0 14 12" fill="none" stroke="#222" strokeWidth="1.100" className="ml-[6px] shrink-0">
        <path d="M1 4h2l3-3v10L3 8H1zM8.500 3.500l5 5M13.500 3.500l-5 5" />
      </svg>
      <Fit w={21} className="ml-[10px] text-[11px]">ENG</Fit>
      <div className="ml-[10px] flex w-[56px] shrink-0 flex-col items-center text-[10.500px] leading-4">
        <Fit w={25} drop={false}>10:07</Fit>
        <Fit w={55} drop={false}>17-01-2024</Fit>
      </div>
      <div className="relative ml-[15px] shrink-0">
        <svg width="16" height="16" viewBox="0 0 16 16">
          <path d="M0 1h15v11H9l-3 3v-3H0z" fill="#111" />
          <path d="M2.500 4h10M2.500 6.500h10M2.500 9h10" stroke="#d4dbea" strokeWidth="1" />
        </svg>
        <div className="absolute left-[7px] top-[7px] flex size-[14px] items-center justify-center rounded-full border border-[#777] bg-[#e4e6ec] text-[9px]">2</div>
      </div>
    </div>
  );
}

export default function App() {
  return (
    <div className="relative flex h-[776px] w-[1380px] flex-col overflow-hidden bg-[#fafafa] font-['Open_Sans','Noto_Sans',sans-serif]">
      <TabStrip />
      <AddressBar />
      <SuiteHeader />
      <div className="flex h-[621px] shrink-0">
        <AppRail />
        <div className="flex flex-1 flex-col">
          <Ribbon />
          <div className="flex h-[552px]">
            <FolderPane />
            <div className="flex flex-1 flex-col">
              <GroupHeader />
              <div className="flex flex-1 overflow-hidden bg-[#f4f4f4]">
                <MessageList />
                <ReadingPane />
                <div className="mr-[6px] h-[195px] w-[8px] bg-[#808080]" />
              </div>
            </div>
          </div>
        </div>
      </div>
      <Taskbar />
      <Annotations />
    </div>
  );
}
